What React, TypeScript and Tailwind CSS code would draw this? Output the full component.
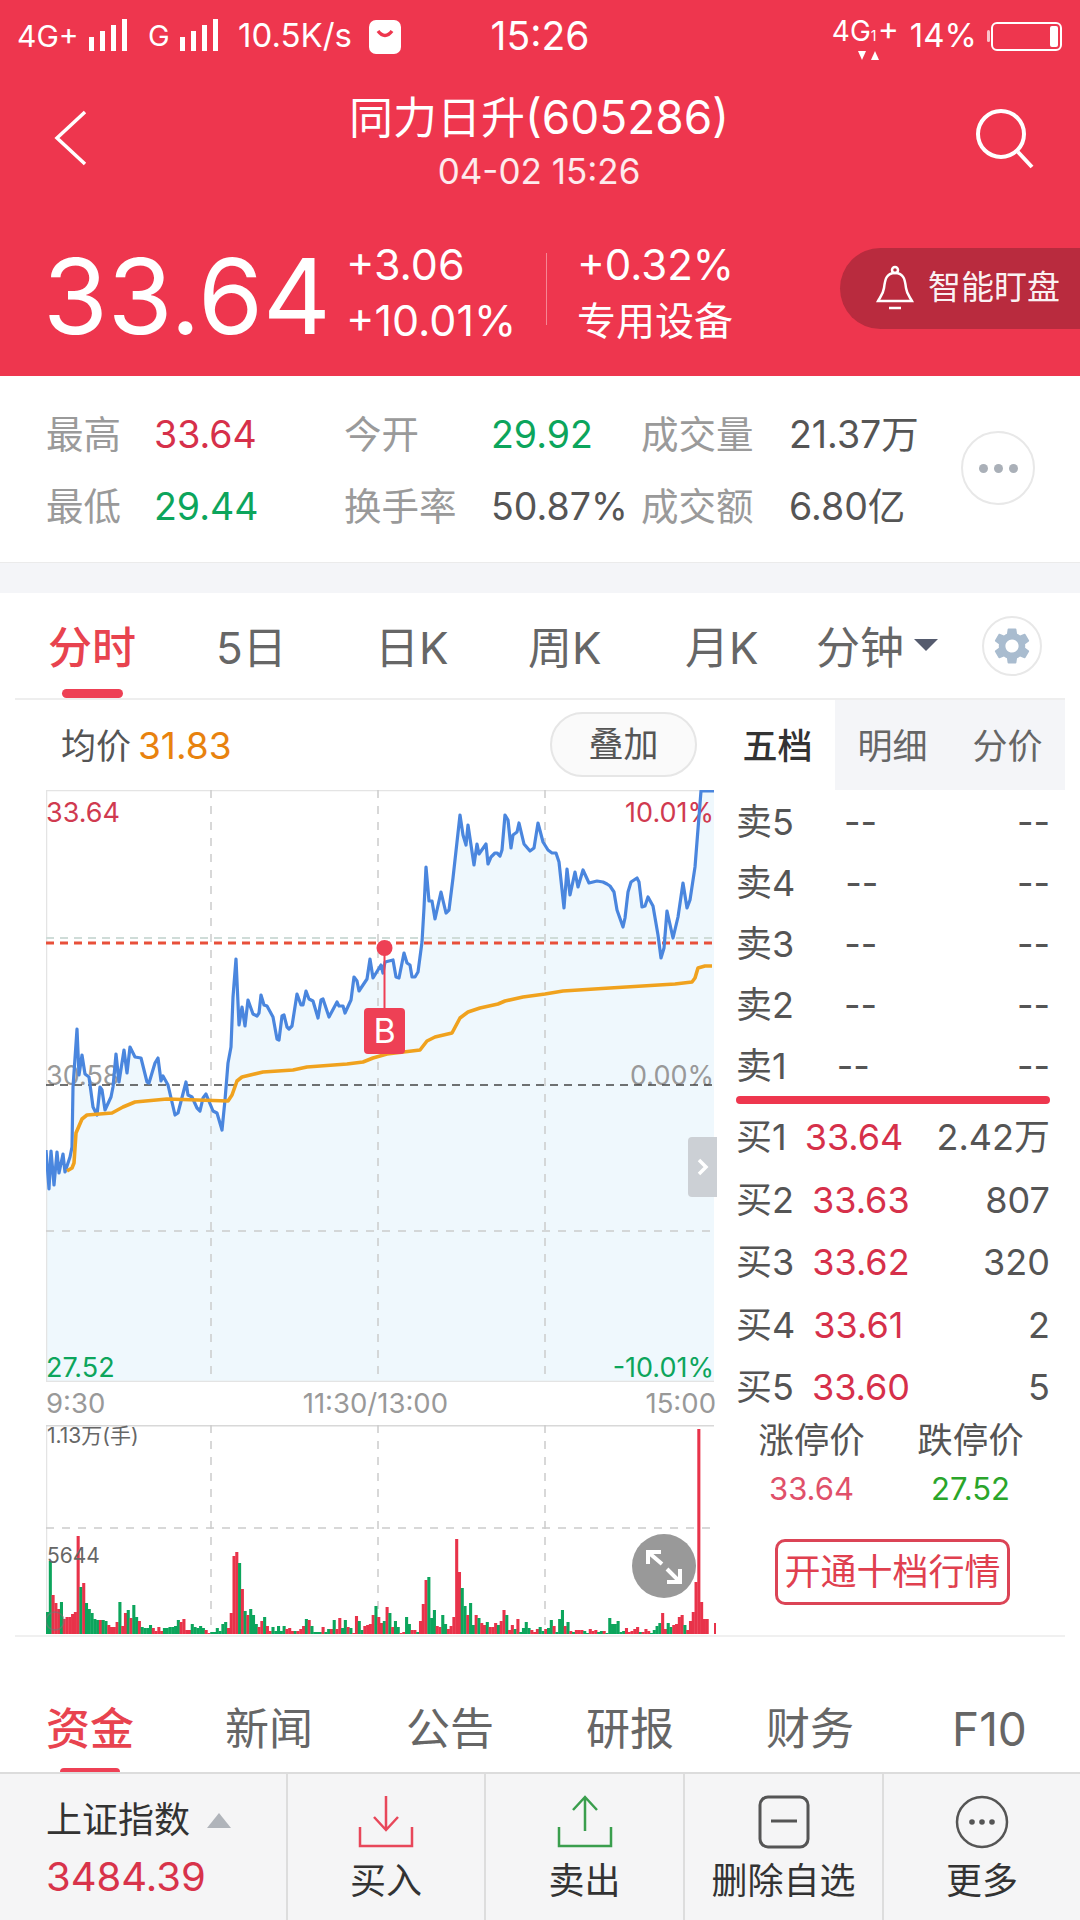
import { MdSettings } from "react-icons/md";

const RED = "#ee364e";

// intraday price, page coordinates (viewBox of the chart svg starts at 46,790)
const priceLine = [
  [46,1150],[49,1189],[51,1151],[54,1185],[57,1152],[59,1173],[63,1154],[65,1172],[70,1157],[72,1147],[73,1087],[77,1029],
  [79,1075],[82,1055],[85,1074],[89,1077],[93,1107],[97,1115],[100,1087],[102,1090],[105,1110],[111,1097],[113,1087],[116,1054],
  [119,1082],[124,1050],[127,1073],[130,1047],[135,1057],[141,1058],[147,1082],[149,1083],[155,1063],[158,1058],[161,1081],[163,1076],
  [168,1085],[175,1115],[178,1113],[186,1082],[188,1095],[192,1097],[197,1108],[200,1111],[203,1098],[206,1094],[213,1111],[217,1113],
  [222,1130],[225,1100],[228,1063],[231,1047],[233,997],[236,959],[239,1025],[242,1007],[245,1026],[248,1000],[253,1014],[257,1016],
  [259,1013],[261,995],[264,1005],[267,1006],[273,1017],[277,1039],[279,1040],[282,1016],[284,1015],[287,1027],[289,1029],[292,1026],
  [297,994],[301,1005],[303,1005],[306,991],[309,999],[313,1001],[318,1018],[321,1000],[323,999],[329,1017],[337,1002],[339,1006],
  [343,1006],[345,1013],[351,1000],[354,977],[357,981],[359,991],[367,979],[370,959],[373,978],[381,965],[383,973],[385,962],
  [389,961],[393,960],[396,977],[399,978],[404,953],[407,963],[410,965],[412,977],[415,977],[418,972],[422,942],[424,908],
  [426,867],[429,901],[432,901],[435,919],[441,892],[446,913],[449,910],[453,878],[460,815],[463,835],[466,845],[468,825],
  [474,865],[477,844],[479,854],[486,844],[488,864],[491,857],[495,853],[497,853],[500,856],[502,850],[505,815],[508,820],
  [511,848],[513,835],[517,832],[519,823],[524,844],[530,851],[534,848],[538,823],[543,842],[548,850],[552,853],[556,853],
  [559,862],[564,908],[567,869],[570,895],[575,872],[578,887],[583,870],[589,883],[597,881],[603,882],[607,884],[610,886],
  [614,892],[617,910],[623,927],[625,918],[628,892],[631,882],[637,878],[639,882],[642,907],[645,906],[648,897],[653,906],
  [658,935],[661,958],[664,948],[667,911],[673,938],[678,917],[683,883],[687,908],[690,900],[695,867],[701,791],[714,791],
];

const avgLine = [
  [67,1171],[72,1168],[74,1163],[76,1133],[82,1119],[87,1115],[112,1113],[123,1107],[135,1102],[167,1099],[228,1101],[232,1095],
  [237,1081],[242,1077],[263,1072],[293,1070],[307,1067],[347,1064],[363,1062],[373,1058],[387,1054],[420,1050],[427,1041],[435,1037],
  [452,1033],[460,1018],[468,1012],[480,1008],[498,1004],[505,1001],[523,997],[545,994],[563,991],[610,988],[675,984],[692,982],
  [695,978],[698,968],[705,966],[712,966],
];

// per-minute volume bar heights: positive closes up (red), negative closes down (green)
const volumes = [
  -22,-73,39,31,25,-32,15,17,17,20,22,98,-47,51,-31,-25,-21,-15,-14,14,-14,-13,9,7,7,12,-32,8,21,-24,16,-29,-17,13,-7,-6,-6,-9,6,3,
  7,3,-6,-6,-7,-7,-8,-14,12,15,4,4,-10,-7,-6,-8,-6,4,1,-2,-2,-6,-3,-10,-12,6,21,78,82,-71,45,-23,19,-25,-19,-10,7,13,-17,8,
  3,-7,-3,-8,-3,-8,5,6,3,-3,3,5,8,-15,14,-8,-2,-2,-2,7,-2,-5,5,-14,5,16,-6,-14,7,-6,1,18,-13,-4,8,9,10,19,-28,17,
  11,-13,27,-21,7,-13,-7,1,2,-17,-10,4,4,-2,13,30,54,-57,-16,-24,8,7,-19,-10,5,8,17,95,62,-46,-28,19,-31,-9,19,-16,
  11,9,-12,7,7,11,-9,13,24,-19,4,9,-5,15,-2,-6,-12,-6,4,2,5,-7,-3,5,-6,-14,8,-2,-15,-24,8,-12,3,-2,4,4,4,-3,
  -1,5,3,4,-2,-3,3,-1,-16,-10,-10,-13,-2,-3,6,2,3,5,7,-2,2,5,3,-1,-4,-8,-11,21,5,-11,-7,9,10,17,19,-9,4,13,
  22,52,205,32,15,15,0,0,11,
];

const toPoints = (line: number[][]) => line.map(([x, y]) => `${x},${y}`).join(" ");

function SignalBars() {
  return (
    <svg width="42" height="34" viewBox="0 0 42 34" fill="white">
      <rect x="1" y="18" width="5" height="14" />
      <rect x="12" y="12" width="5" height="20" />
      <rect x="23" y="6" width="5" height="26" />
      <rect x="34" y="0" width="5" height="32" />
    </svg>
  );
}

function StatusBar() {
  return (
    <div className="h-[72px] flex items-center px-[17px] text-white">
      <div className="flex-1 flex items-center">
        <span className="text-[30px] w-[71px]">4G+</span>
        <SignalBars />
        <span className="text-[29px] ml-[18px] w-[31px]">G</span>
        <SignalBars />
        <span className="text-[33px] ml-[17px] w-[131px]">10.5K/s</span>
        <svg width="32" height="36" viewBox="0 0 32 36">
          <rect y="2" width="32" height="34" rx="7" fill="white" />
          <path d="M9 13 Q16 22 23 13" stroke={RED} strokeWidth="3.5" fill="none" />
        </svg>
      </div>
      <span className="text-[39px] w-[120px] text-center">15:26</span>
      <div className="flex-1 flex items-center justify-end">
        <div className="relative w-[70px] h-[50px] mr-[8px]">
          <span className="absolute left-0 top-0 text-[28px] leading-[40px]">4G</span>
          <span className="absolute left-[39px] top-[10px] text-[14px] leading-[30px]">1</span>
          <span className="absolute left-[46px] top-[-2px] text-[32px] leading-[40px]">+</span>
          <svg className="absolute left-[25px] top-[38px]" width="24" height="12" viewBox="0 0 24 12" fill="white">
            <path d="M1 2 H9 L5 11 Z" />
            <path d="M14 11 H22 L18 2 Z" />
          </svg>
        </div>
        <span className="text-[33px] mr-[10px]">14%</span>
        <svg width="76" height="32" viewBox="0 0 76 32" fill="none">
          <rect x="0" y="10" width="3" height="12" rx="1.5" fill="white" opacity="0.7" />
          <rect x="5" y="3" width="69" height="27" rx="5" stroke="white" strokeWidth="2" />
          <rect x="63" y="6" width="8" height="21" rx="2" fill="white" />
        </svg>
      </div>
    </div>
  );
}

function Header() {
  return (
    <div className="h-[376px] shrink-0 bg-[#ee364e] text-white">
      <StatusBar />
      <div className="h-[128px] flex items-start pl-[54px] pr-[44px]">
        <svg className="mt-[38px]" width="34" height="56" viewBox="0 0 34 56" fill="none" stroke="white" strokeWidth="3.5">
          <path d="M31 2 L3 28 L31 54" />
        </svg>
        <div className="flex-1 flex flex-col items-center pt-[20px] pl-[14px]">
          <span className="text-[44px] leading-[50px]">
            同力日升<span className="text-[46px]">(605286)</span>
          </span>
          <span className="text-[35px] leading-[40px] mt-[8px] text-white/90">04-02 15:26</span>
        </div>
        <svg className="mt-[37px]" width="60" height="60" viewBox="0 0 60 60" fill="none" stroke="white" strokeWidth="4">
          <circle cx="25" cy="25" r="23" />
          <path d="M42 43 L56 58" />
        </svg>
      </div>
      <div className="h-[90px] mt-[50px] flex items-center pl-[43px]">
        <span className="w-[303px] text-[105px] leading-none">33.64</span>
        <div className="w-[200px] mb-[6px] flex flex-col gap-[7px] text-[43px] leading-[49px]">
          <span>+3.06</span>
          <span>+10.01%</span>
        </div>
        <div className="w-px h-[72px] mb-[12px] bg-white/40" />
        <div className="pl-[30px] mb-[6px] flex flex-col gap-[7px] text-[42px] leading-[49px]">
          <span>+0.32%</span>
          <span className="text-[39px]">专用设备</span>
        </div>
        <div className="ml-auto mb-[14px] w-[240px] h-[81px] bg-[#b92b3e] rounded-l-full flex items-center pl-[35px] gap-[13px]">
          <svg width="40" height="46" viewBox="0 0 40 46" fill="none" stroke="white" strokeWidth="2.5">
            <circle cx="20" cy="5" r="3" />
            <path d="M20 8 C11 8 10 15 9 23 C8 30 5 32 3 36 H37 C35 32 32 30 31 23 C30 15 29 8 20 8 Z" />
            <path d="M14 43 H26" />
          </svg>
          <span className="text-[33px] text-white/95">智能盯盘</span>
        </div>
      </div>
    </div>
  );
}

function Stat({ label, value, color }: { label: string; value: string; color: string }) {
  return (
    <>
      <span className="text-[#9a9a9a]">{label}</span>
      <span className={color}>{value}</span>
    </>
  );
}

function Stats() {
  return (
    <div className="h-[187px] shrink-0 relative border-b border-[#ebebeb] pl-[46px] pt-[23px]">
      <div className="grid grid-cols-[108px_190px_147px_150px_148px_150px] auto-rows-[72px] items-center text-[37.5px] leading-none">
        <Stat label="最高" value="33.64" color="text-[#d6304a]" />
        <Stat label="今开" value="29.92" color="text-[#0ca55c]" />
        <Stat label="成交量" value="21.37万" color="text-[#555555]" />
        <Stat label="最低" value="29.44" color="text-[#0ca55c]" />
        <Stat label="换手率" value="50.87%" color="text-[#555555]" />
        <Stat label="成交额" value="6.80亿" color="text-[#555555]" />
      </div>
      <div className="absolute left-[961px] top-[55px] w-[74px] h-[74px] rounded-full border-2 border-[#e8e8e8] flex items-center justify-center gap-[6px]">
        <span className="w-[9px] h-[9px] rounded-full bg-[#aab0b8]" />
        <span className="w-[9px] h-[9px] rounded-full bg-[#aab0b8]" />
        <span className="w-[9px] h-[9px] rounded-full bg-[#aab0b8]" />
      </div>
    </div>
  );
}

function PeriodTabs() {
  return (
    <div className="h-[107px] shrink-0 mx-[15px] pl-[33px] pt-[4px] flex items-center border-b-2 border-[#eeeeee] relative text-[44px] text-[#666666]">
      <span className="w-[168px] font-medium text-[#e8434f]">分时</span>
      <span className="w-[159px]">5日</span>
      <span className="w-[153px]">日K</span>
      <span className="w-[157px]">周K</span>
      <span className="w-[131px]">月K</span>
      <span className="w-[98px]">分钟</span>
      <svg width="24" height="12" viewBox="0 0 24 12" className="mb-[6px]">
        <path d="M0 0 H24 L12 12 Z" fill="#555b6e" />
      </svg>
      <div className="ml-[44px] mb-[4px] w-[60px] h-[60px] rounded-full border-2 border-[#e8e8e8] flex items-center justify-center">
        <MdSettings size={44} color="#a9bccf" />
      </div>
      <div className="absolute left-[47px] bottom-0 w-[61px] h-[9px] rounded-full bg-[#ee4055]" />
    </div>
  );
}

function PriceChart() {
  const area = `46,1382 ${toPoints(priceLine)} 714,1382`;
  return (
    <div className="relative w-[670px] h-[592px] ml-[46px]">
      <svg width="670" height="592" viewBox="46 790 670 592" className="block text-[27px]">
        <polygon points={area} fill="#eff8fd" />
        <path d="M46.5 790 V1382 M46 790.5 H714 M46 1381.5 H714" stroke="#e4e4e4" strokeWidth="1.5" fill="none" />
        <path d="M211 790 V1382 M378 790 V1382 M545 790 V1382 M46 1231 H714" stroke="#cccccc" strokeWidth="1.5" strokeDasharray="8 8" fill="none" />
        <path d="M46 938 H714" stroke="#cfdcd8" strokeWidth="2" strokeDasharray="8 6" />
        <path d="M46 943 H714" stroke="#e8503a" strokeWidth="3" strokeDasharray="8 6" />
        <text x="46" y="822" fill="#d03a50">33.64</text>
        <text x="714" y="822" fill="#d03a50" textAnchor="end">10.01%</text>
        <text x="46" y="1085" fill="#999999">30.58</text>
        <text x="714" y="1085" fill="#999999" textAnchor="end">0.00%</text>
        <text x="46" y="1377" fill="#0ca55c">27.52</text>
        <text x="714" y="1377" fill="#0ca55c" textAnchor="end">-10.01%</text>
        <path d="M46 1085 H714" stroke="#444444" strokeWidth="1.5" strokeDasharray="8 6" />
        <polyline points={toPoints(priceLine)} fill="none" stroke="#4a86de" strokeWidth="3.2" strokeLinejoin="round" />
        <polyline points={toPoints(avgLine)} fill="none" stroke="#f0a21e" strokeWidth="3.6" strokeLinejoin="round" />
        <path d="M384.5 948 V1010" stroke="#ee4055" strokeWidth="2" />
        <circle cx="384.5" cy="948" r="8" fill="#ee4055" />
        <rect x="364" y="1008" width="41" height="46" rx="4" fill="#ee4055" />
        <text x="384.5" y="1043" fill="white" textAnchor="middle" className="text-[34px]">B</text>
      </svg>
      <div className="absolute left-[642px] top-[347px] w-[29px] h-[60px] rounded-l-[4px] bg-[#ccd0d5] flex items-center justify-center">
        <svg width="12" height="20" viewBox="0 0 12 20" fill="none" stroke="white" strokeWidth="3.5">
          <path d="M2 3 L9 10 L2 17" />
        </svg>
      </div>
    </div>
  );
}

function VolumeChart() {
  const step = 668 / 240;
  return (
    <div className="relative w-[670px] h-[210px] ml-[46px]">
      <svg width="670" height="210" viewBox="46 1425 670 210" className="block">
        <path d="M46.5 1425 V1634" stroke="#e4e4e4" strokeWidth="1.5" />
        <path d="M46 1425.5 H714" stroke="#d8d8d8" strokeWidth="2" />
        <path d="M211 1425 V1634 M378 1425 V1634 M545 1425 V1634 M46 1528 H714" stroke="#cccccc" strokeWidth="1.5" strokeDasharray="8 8" fill="none" />
        {volumes.map((v, i) => (
          <rect
            key={i}
            x={46 + i * step}
            y={1634 - Math.abs(v)}
            width={step + 0.3}
            height={Math.abs(v)}
            fill={v > 0 ? "#e8334a" : "#0ca55c"}
          />
        ))}
        <circle cx="55" cy="1621" r="9" fill="none" stroke="#777777" strokeWidth="1.5" opacity="0.6" />
        <text x="47" y="1443" fill="#666666" className="text-[21px]">1.13万(手)</text>
        <text x="47" y="1563" fill="#666666" className="text-[21px]">5644</text>
      </svg>
      <div className="absolute left-[586px] top-[109px] w-[64px] h-[64px] rounded-full bg-[#999999]">
        <svg width="64" height="64" viewBox="0 0 64 64" fill="none" stroke="white" strokeWidth="4">
          <path d="M16 30 V18 H29 M16 18 L30 30" />
          <path d="M48 35 V48 H35 M48 48 L35 35" />
        </svg>
      </div>
    </div>
  );
}

function ChartColumn() {
  return (
    <div className="w-[725px] shrink-0">
      <div className="h-[90px] pl-[61px] pr-[28px] flex items-center text-[35px]">
        <span className="text-[#555555] mt-[2px]">均价</span>
        <span className="ml-[7px] mt-[2px] text-[37px] text-[#e8820e]">31.83</span>
        <div className="ml-auto mb-[2px] w-[147px] h-[65px] rounded-full border-2 border-[#e6e6e6] bg-[#fafafa] flex items-center justify-center text-[35px] text-[#555555]">
          叠加
        </div>
      </div>
      <PriceChart />
      <div className="h-[43px] w-[670px] ml-[46px] flex items-center justify-between text-[27.5px] text-[#999999]">
        <span>9:30</span>
        <span>11:30/13:00</span>
        <span>15:00</span>
      </div>
      <VolumeChart />
    </div>
  );
}

function SellRow({ label }: { label: string }) {
  return (
    <div className="h-[61px] flex items-center">
      <span>{label}</span>
      <span className="ml-[50px]">--</span>
      <span className="ml-auto">--</span>
    </div>
  );
}

function BuyRow({ label, price, qty }: { label: string; price: string; qty: string }) {
  return (
    <div className="h-[62.5px] flex items-center">
      <span>{label}</span>
      <span className="ml-[18px] text-[#d6304a]">{price}</span>
      <span className="ml-auto">{qty}</span>
    </div>
  );
}

function OrderBook() {
  return (
    <div className="w-[340px] shrink-0 flex flex-col">
      <div className="h-[90px] flex items-center text-[35px] text-[#666666] text-center">
        <span className="w-[105px] mr-[5px] mt-[3px] font-medium text-[#333333]">五档</span>
        <div className="flex-1 h-full pt-[3px] bg-[#f4f5f8] flex items-center">
          <span className="w-[115px]">明细</span>
          <span className="w-[115px]">分价</span>
        </div>
      </div>
      <div className="pl-[11px] pr-[15px] text-[36px] text-[#555555] leading-none">
        <div className="pt-[1px]">
          <SellRow label="卖5" />
          <SellRow label="卖4" />
          <SellRow label="卖3" />
          <SellRow label="卖2" />
          <SellRow label="卖1" />
        </div>
        <div className="h-[8px] rounded-full bg-[#ee364e] mb-[2px]" />
        <BuyRow label="买1" price="33.64" qty="2.42万" />
        <BuyRow label="买2" price="33.63" qty="807" />
        <BuyRow label="买3" price="33.62" qty="320" />
        <BuyRow label="买4" price="33.61" qty="2" />
        <BuyRow label="买5" price="33.60" qty="5" />
        <div className="w-[318px] -ml-[4px] grid grid-cols-2 text-center mt-[4px] text-[35.5px]">
          <span>涨停价</span>
          <span>跌停价</span>
          <span className="text-[31px] text-[#e0506a] mt-[15px]">33.64</span>
          <span className="text-[31px] text-[#2aa52a] mt-[15px]">27.52</span>
        </div>
        <div className="mt-[35px] ml-[39px] w-[235px] h-[66px] rounded-[10px] border-[3px] border-[#db4456] flex items-center justify-center text-[#e0404f]">
          开通十档行情
        </div>
      </div>
    </div>
  );
}

function NewsTabs() {
  return (
    <div className="h-[137px] shrink-0 relative border-t-2 border-[#f0f0f0] mx-[15px] pl-[31px] pt-[49px] flex items-center text-[44px] text-[#666666]">
      <span className="w-[179px] font-medium text-[#e8434f]">资金</span>
      <span className="w-[181px]">新闻</span>
      <span className="w-[180px]">公告</span>
      <span className="w-[180px]">研报</span>
      <span className="w-[186px]">财务</span>
      <span className="text-[46px]">F10</span>
      <div className="absolute left-[45px] bottom-0 w-[60px] h-[4px] rounded-t bg-[#ee4055]" />
    </div>
  );
}

function Action({ label, width, children }: { label: string; width: string; children: React.ReactNode }) {
  return (
    <div className={`${width} border-l-2 border-[#dddddd] flex flex-col items-center pt-[20px]`}>
      <div className="h-[56px] flex items-center justify-center">{children}</div>
      <span className="mt-[13px] text-[36px] leading-none text-[#333333]">{label}</span>
    </div>
  );
}

function BottomBar() {
  return (
    <div className="flex-1 flex bg-[#f5f5f6] border-t-2 border-[#dcdcdc]">
      <div className="w-[286px] pl-[46px] pt-[26px]">
        <div className="flex items-center text-[36px] leading-[40px] text-[#333333]">
          上证指数
          <svg className="ml-[17px]" width="24" height="15" viewBox="0 0 24 15">
            <path d="M12 0 L24 15 H0 Z" fill="#b0b4ba" />
          </svg>
        </div>
        <div className="mt-[13px] text-[40px] leading-[48px] text-[#d8334a]">3484.39</div>
      </div>
      <Action label="买入" width="w-[198px]">
        <svg width="56" height="54" viewBox="0 0 56 54" fill="none" stroke="#e8475a" strokeWidth="2.5">
          <path d="M28 1 V34 M16 22 L28 35 L40 22" />
          <path d="M2 32 V51 H54 V32" />
        </svg>
      </Action>
      <Action label="卖出" width="w-[199px]">
        <svg width="56" height="54" viewBox="0 0 56 54" fill="none" stroke="#3a9e4d" strokeWidth="2.5">
          <path d="M28 36 V2 M16 15 L28 2 L40 15" />
          <path d="M2 32 V51 H54 V32" />
        </svg>
      </Action>
      <Action label="删除自选" width="w-[199px]">
        <svg width="52" height="54" viewBox="0 0 52 54" fill="none" stroke="#555555" strokeWidth="3">
          <rect x="2" y="2" width="48" height="50" rx="8" />
          <path d="M13 26 H39" />
        </svg>
      </Action>
      <Action label="更多" width="w-[198px]">
        <svg width="54" height="54" viewBox="0 0 54 54" fill="none">
          <circle cx="27" cy="27" r="25" stroke="#555555" strokeWidth="2.5" />
          <circle cx="17" cy="27" r="2.8" fill="#555555" />
          <circle cx="27" cy="27" r="2.8" fill="#555555" />
          <circle cx="37" cy="27" r="2.8" fill="#555555" />
        </svg>
      </Action>
    </div>
  );
}

export default function App() {
  return (
    <div className="w-[1080px] h-[1920px] flex flex-col overflow-hidden bg-white font-['Inter','Noto_Sans_CJK_SC',sans-serif]">
      <Header />
      <Stats />
      <div className="h-[30px] shrink-0 bg-[#f4f5f8]" />
      <PeriodTabs />
      <div className="h-[935px] shrink-0 flex">
        <ChartColumn />
        <OrderBook />
      </div>
      <NewsTabs />
      <BottomBar />
    </div>
  );
}
